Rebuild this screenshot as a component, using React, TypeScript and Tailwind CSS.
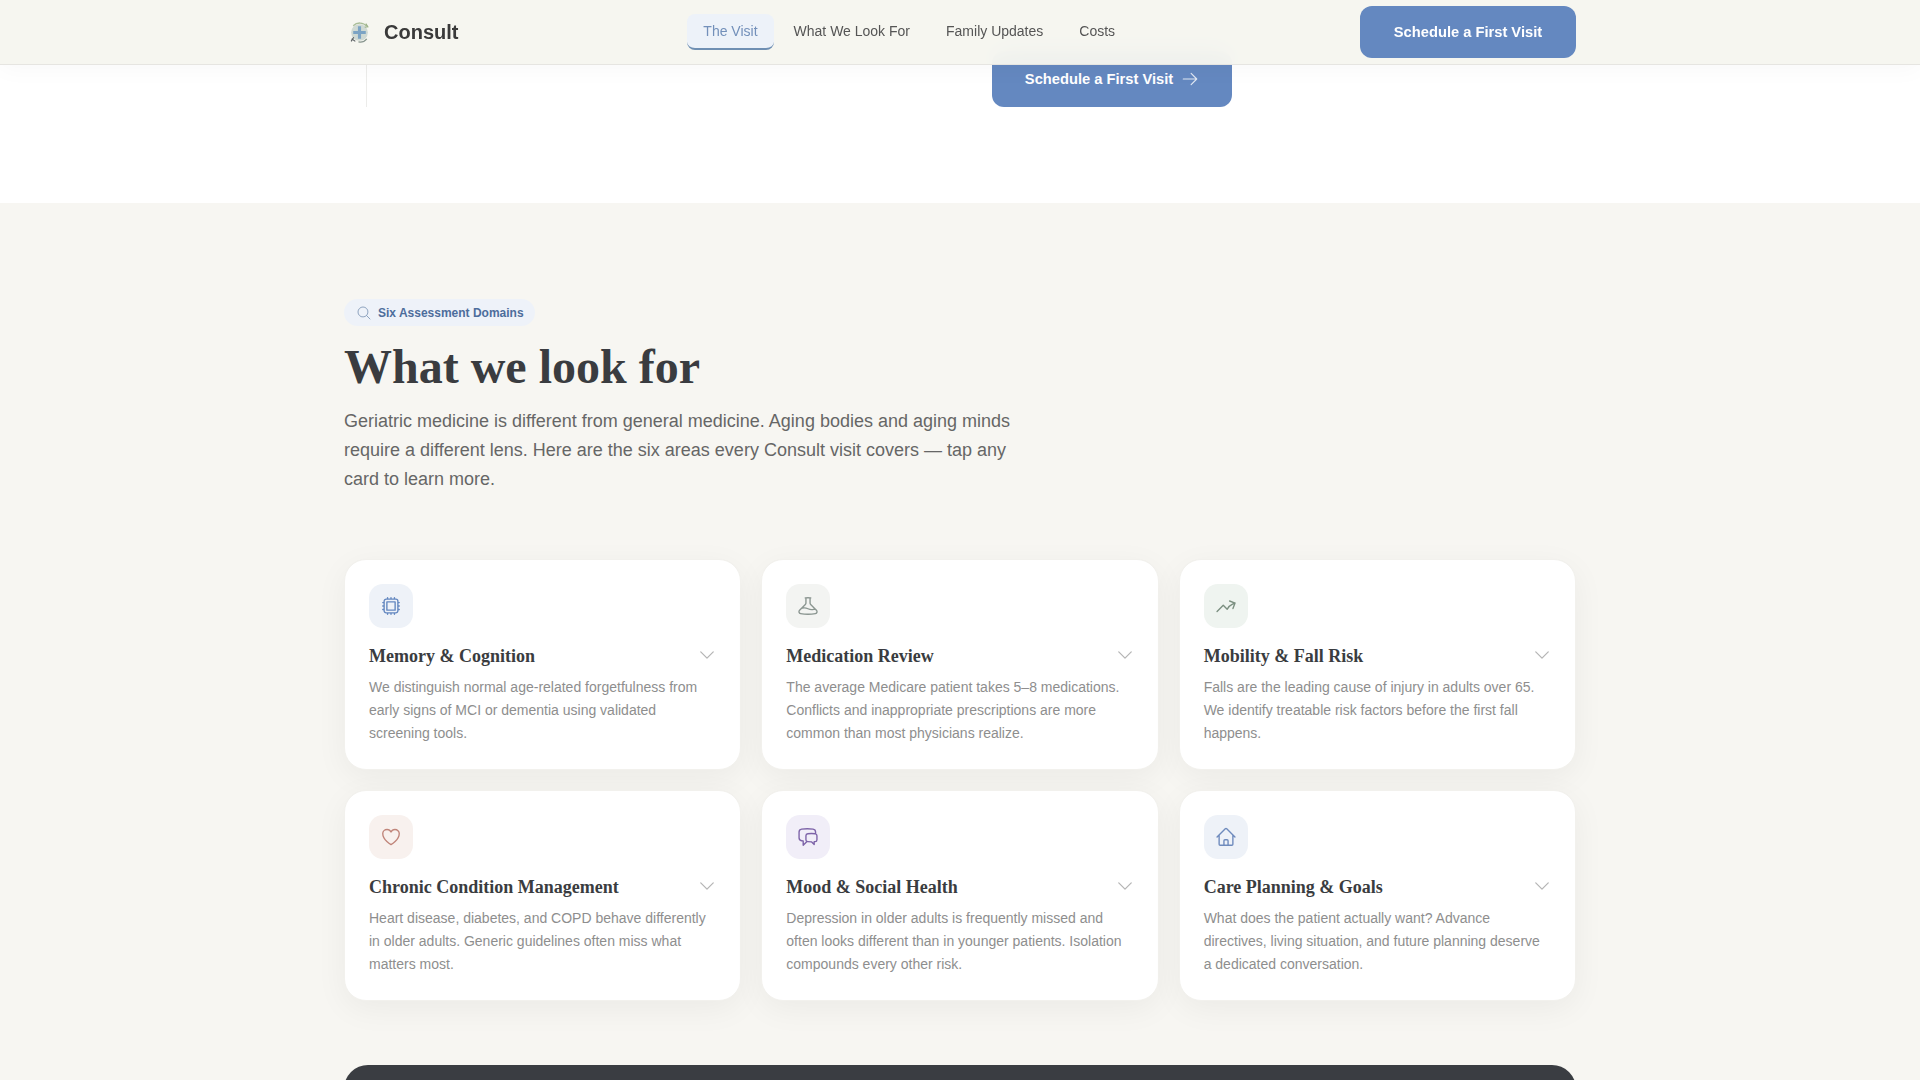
import {
  HiOutlineArrowRight,
  HiOutlineArrowTrendingUp,
  HiOutlineBeaker,
  HiOutlineChatBubbleLeftRight,
  HiOutlineChevronDown,
  HiOutlineCpuChip,
  HiOutlineHeart,
  HiOutlineHome,
  HiOutlineMagnifyingGlass,
} from "react-icons/hi2";

const domains = [
  {
    title: "Memory & Cognition",
    text: "We distinguish normal age-related forgetfulness from early signs of MCI or dementia using validated screening tools.",
    icon: HiOutlineCpuChip,
    box: "bg-[#eef2f8]",
    color: "text-[#6488c0]",
  },
  {
    title: "Medication Review",
    text: "The average Medicare patient takes 5–8 medications. Conflicts and inappropriate prescriptions are more common than most physicians realize.",
    icon: HiOutlineBeaker,
    box: "bg-[#f3f4f2]",
    color: "text-[#8b9691]",
  },
  {
    title: "Mobility & Fall Risk",
    text: "Falls are the leading cause of injury in adults over 65. We identify treatable risk factors before the first fall happens.",
    icon: HiOutlineArrowTrendingUp,
    box: "bg-[#eff4f0]",
    color: "text-[#7b8f80]",
  },
  {
    title: "Chronic Condition Management",
    text: "Heart disease, diabetes, and COPD behave differently in older adults. Generic guidelines often miss what matters most.",
    icon: HiOutlineHeart,
    box: "bg-[#f8f1ee]",
    color: "text-[#c0857a]",
  },
  {
    title: "Mood & Social Health",
    text: "Depression in older adults is frequently missed and often looks different than in younger patients. Isolation compounds every other risk.",
    icon: HiOutlineChatBubbleLeftRight,
    box: "bg-[#f1eef8]",
    color: "text-[#7d63a8]",
  },
  {
    title: "Care Planning & Goals",
    text: "What does the patient actually want? Advance directives, living situation, and future planning deserve a dedicated conversation.",
    icon: HiOutlineHome,
    box: "bg-[#eef2f8]",
    color: "text-[#6f8bbd]",
  },
];

function Logo() {
  return (
    <svg width="23" height="23" viewBox="0 0 22 22" fill="none">
      <circle cx="11" cy="11" r="8" fill="#cfd9d3" />
      <path d="M9.5 5h3v4.5H17v3h-4.5V17h-3v-4.5H5v-3h4.5z" fill="#7ba3c4" />
      <path d="M5 4.5A9 9 0 0 1 18 5" stroke="#a9bd98" strokeWidth="1.3" />
      <path d="M17 2.5l2 3-3 .5" stroke="#9cb288" strokeWidth="1.1" />
      <path d="M3.5 17l3.5 2.5M5.5 15.5l-2.5 4" stroke="#5a5f63" strokeWidth="1.1" />
      <path d="M10 20c3 .5 6-.5 8-3" stroke="#86948d" strokeWidth="1.1" />
    </svg>
  );
}

export default function App() {
  return (
    <div className="relative h-screen overflow-hidden bg-white font-['Liberation_Sans',Arial,sans-serif]">
      <header className="absolute inset-x-0 top-0 z-10 h-[65px] border-b border-[#e6e5e1] bg-[#f6f5ef]/95 shadow-[0_4px_24px_rgba(0,0,0,0.03)] backdrop-blur-md">
        <div className="mx-auto flex h-16 w-[1232px] items-center justify-between">
          <div className="flex items-center gap-[13px] pl-1">
            <Logo />
            <span className="text-xl font-bold text-[#3a3a3a]">Consult</span>
          </div>
          <nav className="flex items-center gap-1 text-sm text-[#555555]">
            <a className="flex h-[36px] items-center rounded-lg border-b-2 border-[#6f8fb3] bg-[#edf2f9] px-4 text-[#7390ba]">The Visit</a>
            <a className="flex h-[36px] items-center border-b-2 border-transparent px-4">What We Look For</a>
            <a className="flex h-[36px] items-center border-b-2 border-transparent px-4">Family Updates</a>
            <a className="flex h-[36px] items-center border-b-2 border-transparent px-4">Costs</a>
          </nav>
          <button className="h-[52px] w-[216px] rounded-xl bg-[#6488c0] text-[14.7px] font-bold text-white">
            Schedule a First Visit
          </button>
        </div>
      </header>

      <section className="bg-white">
        <div className="mx-auto flex w-[1232px] pb-[96px] pt-[51px]">
          <div className="ml-[22px] w-[626px] border-l border-[#ececea]" />
          <button className="flex h-[56px] w-[240px] items-center justify-center gap-2 rounded-xl bg-[#6488c0] text-[14.7px] font-bold text-white">
            Schedule a First Visit
            <HiOutlineArrowRight size={18} className="text-white/80" />
          </button>
        </div>
      </section>

      <section className="bg-[#f7f6f2] pt-[96px]">
        <div className="mx-auto w-[1232px]">
          <div className="flex h-[27px] w-[191px] items-center gap-1.5 rounded-full bg-[#eef2f9] px-3 text-xs font-bold whitespace-nowrap text-[#4d6d9c]">
            <HiOutlineMagnifyingGlass size={16} className="shrink-0 text-[#8ea3bf]" />
            Six Assessment Domains
          </div>
          <h2 className="mt-[11px] font-['Liberation_Serif',serif] text-5xl leading-[60px] font-bold text-[#3a3c40]">
            What we look for
          </h2>
          <p className="mt-[10px] max-w-2xl text-lg leading-[29px] text-[#666666]">
            Geriatric medicine is different from general medicine. Aging bodies and aging minds require a different lens. Here are the six areas every Consult visit covers — tap any card to learn more.
          </p>

          <div className="mt-[65px] grid grid-cols-3 gap-5">
            {domains.map((d) => (
              <div key={d.title} className="h-[211px] rounded-[22px] border border-[#f2f1ed] bg-white p-6 shadow-[0_8px_32px_rgba(0,0,0,0.05)]">
                <div className={`flex h-11 w-11 items-center justify-center rounded-[14px] ${d.box}`}>
                  <d.icon size={22} className={d.color} />
                </div>
                <div className="mt-[14px] flex items-center justify-between">
                  <h3 className="font-['Liberation_Serif',serif] text-lg leading-7 font-bold text-[#3a3c40]">{d.title}</h3>
                  <HiOutlineChevronDown size={20} className="-mr-px -mt-0.5 text-[#b5b5b5]" />
                </div>
                <p className="mt-[6px] text-sm leading-[23px] text-[#8e8e8e]">{d.text}</p>
              </div>
            ))}
          </div>

          <div className="mt-[64px] h-[200px] rounded-3xl bg-[#3a3d42]" />
        </div>
      </section>
    </div>
  );
}
